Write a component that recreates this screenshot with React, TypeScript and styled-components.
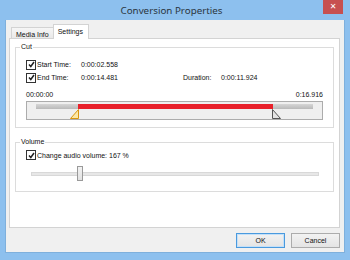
import * as React from "react";
import styled, { createGlobalStyle } from "styled-components";

const GlobalStyle = createGlobalStyle`
  html, body {
    margin: 0;
    padding: 0;
    background: #8dc0ee;
  }
  body {
    font-family: "Liberation Sans", Arial, sans-serif;
    font-size: 7px;
    color: #111;
  }
`;

const cut = { start: 2.558, end: 14.481, total: 16.916 };
const volume = { value: 167, max: 1000 };

const Window = styled.div`
  width: 350px;
  height: 260px;
  background: #8dc0ee;
  display: flex;
  flex-direction: column;
  box-sizing: border-box;
`;

const TitleBar = styled.div`
  height: 20px;
  display: grid;
  grid-template-columns: 1fr auto 1fr;
  align-items: start;
  padding-right: 7px;
`;

const Title = styled.div`
  grid-column: 2;
  font-family: "Noto Sans", "Open Sans", sans-serif;
  font-size: 9.8px;
  line-height: 22px;
  color: #2b3540;
`;

const CloseButton = styled.div`
  grid-column: 3;
  justify-self: end;
  width: 20px;
  height: 14px;
  background: #c75050;
  color: #fff;
  font-family: "DejaVu Sans", sans-serif;
  font-size: 8px;
  font-weight: bold;
  line-height: 14px;
  text-align: center;
`;

const Client = styled.div`
  flex: 1;
  margin: 0 5px 7px;
  background: #f0f0f0;
  border: 1px solid #7fb0dc;
  border-top: none;
  padding: 5px 4px 3px 3px;
  display: flex;
  flex-direction: column;
`;

const TabStrip = styled.div`
  display: flex;
  align-items: flex-end;
  height: 14px;
  padding-left: 2px;
  margin-bottom: -1px;
  position: relative;
  z-index: 1;
`;

const Tab = styled.div<{ $active?: boolean }>`
  box-sizing: border-box;
  height: ${(p) => (p.$active ? "15px" : "12px")};
  padding: ${(p) => (p.$active ? "2px 5px 0 4px" : "2px 4px 0 4px")};
  margin-left: ${(p) => (p.$active ? "-1px" : "0")};
  border: 1px solid #d3d3d3;
  border-bottom: ${(p) => (p.$active ? "none" : "1px solid #d3d3d3")};
  background: ${(p) => (p.$active ? "#fff" : "linear-gradient(#f6f6f6, #e9e9e9)")};
  line-height: 9px;
  white-space: nowrap;
`;

const Panel = styled.div`
  height: 190px;
  box-sizing: border-box;
  background: #fff;
  border: 1px solid #d3d3d3;
  padding: 4px 5px 0 5px;
  display: flex;
  flex-direction: column;
  gap: 10px;
`;

const GroupBox = styled.fieldset<{ $bottom: number }>`
  margin: 0;
  border: 1px solid #dcdcdc;
  padding: 4px 10px ${(p) => p.$bottom}px 10px;
  min-width: 0;
`;

const Legend = styled.legend`
  margin-left: -6px;
  padding: 0 1px;
  line-height: 8px;
`;

const TimeGrid = styled.div`
  display: grid;
  grid-template-columns: 55px 102px 38px auto;
  grid-auto-rows: 13px;
  align-items: center;
  margin-top: 3px;
`;

const CheckLabel = styled.label`
  display: flex;
  align-items: center;
  gap: 1px;
  white-space: nowrap;
`;

const Box = styled.span`
  width: 8px;
  height: 8px;
  border: 1px solid #333;
  background: #fff;
  display: flex;
  align-items: center;
  justify-content: center;
  flex: none;
`;

const Scale = styled.div`
  display: flex;
  justify-content: space-between;
  line-height: 8px;
  margin-top: 7px;
  margin-bottom: 2px;
`;

const SliderBox = styled.div`
  height: 19px;
  box-sizing: border-box;
  border: 1px solid #acacac;
  background: #efefef;
  padding: 2px 9px 0 9px;
`;

const Track = styled.div`
  position: relative;
  height: 5px;
  background: linear-gradient(#d6d6d6, #b9b9b9);
`;

const Selection = styled.div`
  position: absolute;
  top: 0;
  bottom: 0;
  background: #e8202a;
`;

const Marker = styled.svg`
  position: absolute;
  top: 5px;
`;

const VolumeRow = styled.div`
  margin-top: 0;
`;

const VolumeSlider = styled.div`
  position: relative;
  margin: 12px 4px 0 5px;
  height: 4px;
  box-sizing: border-box;
  background: #e7e7e7;
  border: 1px solid #d8d8d8;
`;

const Thumb = styled.div`
  position: absolute;
  top: -7px;
  width: 6px;
  height: 15px;
  box-sizing: border-box;
  margin-left: -3px;
  background: linear-gradient(#f2f2f2, #e2e2e2);
  border: 1px solid #9a9a9a;
`;

const ButtonRow = styled.div`
  display: flex;
  justify-content: flex-end;
  gap: 6px;
  margin-top: 5px;
`;

const Button = styled.button<{ $default?: boolean }>`
  width: 49px;
  height: 15px;
  padding: 0;
  font-family: "Liberation Sans", Arial, sans-serif;
  font-size: 7px;
  color: #111;
  background: linear-gradient(#f2f2f2, #e4e4e4);
  border: 1px solid ${(p) => (p.$default ? "#4a9ade" : "#acacac")};
  box-shadow: ${(p) => (p.$default ? "inset 0 0 0 1px #c4e0f8" : "none")};
`;

const Check = () => (
  <Box>
    <svg width="7" height="7" viewBox="0 0 7 7">
      <path d="M1 3.5 L2.8 5.5 L6 1" stroke="#222" strokeWidth="1.5" fill="none" />
    </svg>
  </Box>
);

export default function App() {
  const startPct = (cut.start / cut.total) * 100;
  const endPct = (cut.end / cut.total) * 100;
  const volPct = (volume.value / volume.max) * 100;

  return (
    <>
      <GlobalStyle />
      <Window>
        <TitleBar>
          <Title>Conversion Properties</Title>
          <CloseButton>✕</CloseButton>
        </TitleBar>
        <Client>
          <TabStrip>
            <Tab>Media Info</Tab>
            <Tab $active>Settings</Tab>
          </TabStrip>
          <Panel>
            <GroupBox $bottom={7}>
              <Legend>Cut</Legend>
              <TimeGrid>
                <CheckLabel>
                  <Check />
                  Start Time:
                </CheckLabel>
                <span>0:00:02.558</span>
                <span />
                <span />
                <CheckLabel>
                  <Check />
                  End Time:
                </CheckLabel>
                <span>0:00:14.481</span>
                <span>Duration:</span>
                <span>0:00:11.924</span>
              </TimeGrid>
              <Scale>
                <span>00:00:00</span>
                <span>0:16.916</span>
              </Scale>
              <SliderBox>
                <Track>
                  <Selection style={{ left: `${startPct}%`, width: `${endPct - startPct}%` }} />
                  <Marker
                    width="9"
                    height="10"
                    viewBox="0 0 9 10"
                    style={{ left: `calc(${startPct}% - 8px)` }}
                  >
                    <path d="M8.5 0.5 L8.5 9.5 L0.5 9.5 Z" fill="#fbe7a6" stroke="#d9960f" />
                  </Marker>
                  <Marker
                    width="9"
                    height="10"
                    viewBox="0 0 9 10"
                    style={{ left: `calc(${endPct}% - 1px)` }}
                  >
                    <path d="M0.5 0.5 L0.5 9.5 L8.5 9.5 Z" fill="#e4e4e4" stroke="#555" />
                  </Marker>
                </Track>
              </SliderBox>
            </GroupBox>
            <GroupBox $bottom={15}>
              <Legend>Volume</Legend>
              <VolumeRow>
                <CheckLabel>
                  <Check />
                  Change audio volume: 167 %
                </CheckLabel>
              </VolumeRow>
              <VolumeSlider>
                <Thumb style={{ left: `${volPct}%` }} />
              </VolumeSlider>
            </GroupBox>
          </Panel>
          <ButtonRow>
            <Button $default>OK</Button>
            <Button>Cancel</Button>
          </ButtonRow>
        </Client>
      </Window>
    </>
  );
}
